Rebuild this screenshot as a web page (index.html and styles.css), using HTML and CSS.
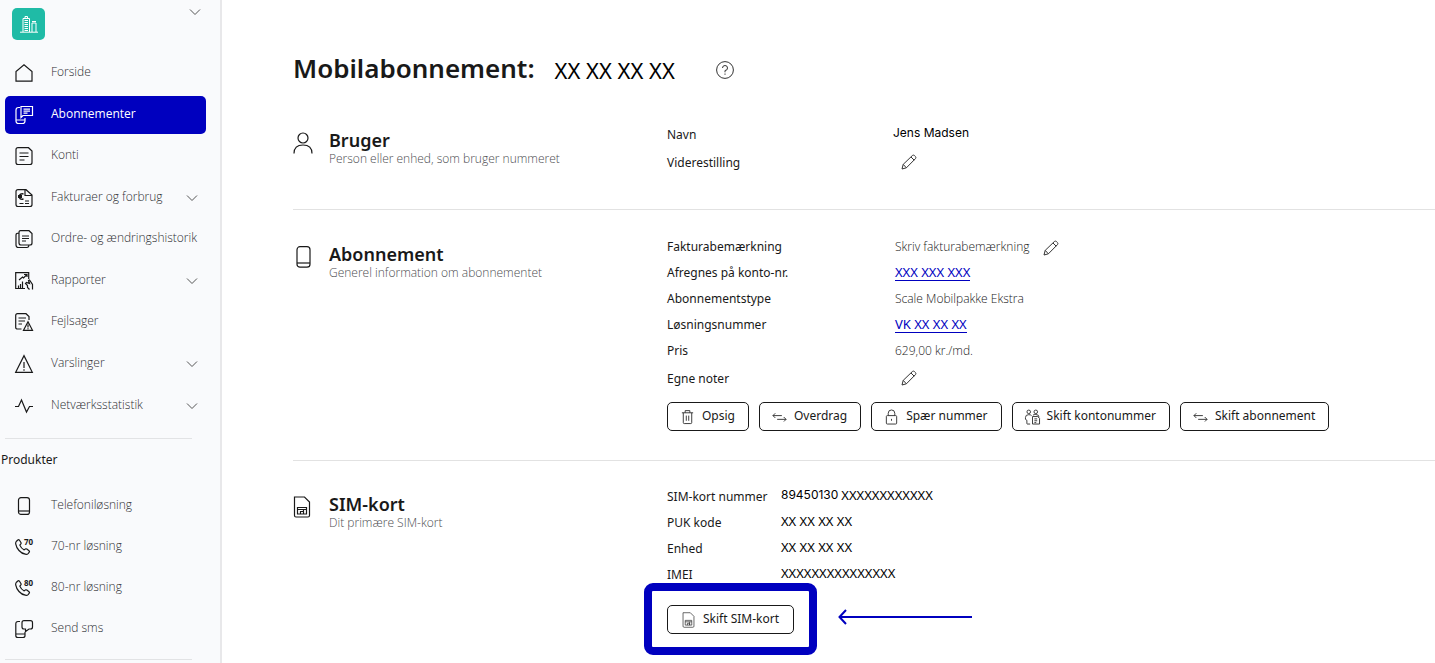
FILE: index.html
```html
<!DOCTYPE html>
<html lang="da">
<head>
<meta charset="utf-8">
<title>Mobilabonnement</title>
<link rel="stylesheet" href="styles.css">
</head>
<body>
<svg class="sprite" aria-hidden="true">
  <symbol id="chevron" viewBox="0 0 12 8"><path d="M1 1.500 6 6.500 11 1.500"/></symbol>
  <symbol id="pencil" viewBox="0 0 16 16"><path d="M1 15l1.200-4.600L11.400 1.500q1-.8 2 0l1.100 1.100q.8 1 0 2L5.400 13.800 1 15ZM2.200 10.400l3.200 3.400M10 3l3.200 3.200"/></symbol>
  <symbol id="phone" viewBox="0 0 18 18"><rect x="3.500" y=".6" width="11" height="16.800" rx="2.500"/><path d="M3.500 14h11"/></symbol>
  <symbol id="handset" viewBox="0 0 18 18"><path d="M1.500 3.200 2.800 2q1-.7 1.700.3l1.400 2.200q.5.9-.2 1.600l-.9 1q1.200 3 4.400 4.800l1-.8q.8-.6 1.600 0l2.200 1.600q.9.8.1 1.700l-1 1.200q-1 1-2.800.6C5.500 15.500 1.500 10.500.7 5.800Q.5 4.200 1.500 3.200Z"/></symbol>
  <symbol id="sim" viewBox="0 0 18 22"><path d="M1.500 1h10l5 5v13.500q0 1.500-1.500 1.500H3q-1.500 0-1.500-1.500Z"/><path d="M4.500 11.500h9v6.500h-9ZM4.500 13.500h9M7.500 18v-2.500h3V18M10.500 13.500V18"/></symbol>
  <symbol id="swap" viewBox="0 0 16 10"><path d="M10.500 3.500H1M3.500 1 1 3.500 3.500 6M5.500 7.500H15M12.500 5 15 7.500 12.500 10"/></symbol>
</svg>
<div class="page">
  <aside class="sidebar">
    <div class="account">
      <span class="logo"><svg viewBox="0 0 18 18"><path d="M0 17.200h18M3 17V3.500h6.500V17M5 3.500V1.500h2.500v2M12 17V8h4V17M12 6.500h4M4.500 5.500H8M4.500 7.500H8M4.500 9.500H8M4.500 11.500H8M4.500 13.500H8M4.500 15.500H8"/></svg></span>
      <button class="toggle" aria-label="Skift konto"><svg class="chevron"><use href="#chevron"/></svg></button>
    </div>
    <nav aria-label="Hovedmenu">
      <ul class="menu">
        <li><a href="#"><svg viewBox="0 0 18 18"><path d="M1 17.200V7.500L9 .8l8 6.700v9.700Z"/></svg><span>Forside</span></a></li>
        <li class="tall"><a href="#" class="active" aria-current="page"><svg viewBox="0 0 18 18"><path d="M5 1.500H3.500Q1 1.500 1 4v11q0 2.500 2.500 2.500h4Q10 17.500 10 15v-3M1 14h9M6 .5h11.500v9H8L6 11.500ZM8.500 3.200h6.500M8.500 5.200h6.500M8.500 7.200h4"/></svg><span>Abonnementer</span></a></li>
        <li><a href="#"><svg viewBox="0 0 18 18"><path d="M3 .7h10.500L17 4v11.500q0 2-2 2H3q-2 0-2-2v-13Q1 .7 3 .7ZM4.500 6h9M4.500 9.500h9M4.500 13h5"/></svg><span>Konti</span></a></li>
        <li class="tall"><a href="#"><svg viewBox="0 0 18 18"><path d="M3 .7h8L17 6v9.500q0 2-2 2H3q-2 0-2-2v-13Q1 .7 3 .7ZM10 1v5.500h6.500M4.500 14.500h4M10 14.500h4M10 12h4"/><path class="bold" d="M8.500 5q-3.700-.8-4 2.500t4 2.500M3 6.800h4M3 8.300h4"/></svg><span>Fakturaer og forbrug</span><svg class="chevron"><use href="#chevron"/></svg></a></li>
        <li><a href="#"><svg viewBox="0 0 18 18"><path d="M5.500.7H14L17 3.500V13q0 2-2 2H6q-2 0-2-2V2.500Q4 .7 5.500.7ZM4 3q-3 0-3 2v10q0 2.500 2.500 2.500H12q1.500 0 2-2M7 6h7M7 8.500h7M7 11h4"/></svg><span>Ordre- og ændringshistorik</span></a></li>
        <li class="tall"><a href="#"><svg viewBox="0 0 18 18"><path d="M10 16.500H.7V.7h13V7M4 8l3.500-3 1 1L12 2.500M9 2.500h3V5M3.500 16v-2.500M5.500 16v-4M7.500 16V9.500M17.500 17.500v-5l-3-4.500-1 .5 1 3-3-1-1 1 2 2v2l2 2"/></svg><span>Rapporter</span><svg class="chevron"><use href="#chevron"/></svg></a></li>
        <li><a href="#"><svg viewBox="0 0 18 18"><path d="M6.500 16H2.500Q.7 16 .7 14.500V2.500Q.7.700 2.500.7H11L14 3.500V7M3.500 5H11M3.500 8H10M3.500 11H7M8.500 17.300 13 8.700l4.500 8.600ZM13 11.500v3M13 15.300v1"/></svg><span>Fejlsager</span></a></li>
        <li class="tall"><a href="#"><svg viewBox="0 0 18 18"><path d="M.7 17.300 9 .7l8.300 16.600ZM9 7v6M9 14.200v1.500"/></svg><span>Varslinger</span><svg class="chevron"><use href="#chevron"/></svg></a></li>
        <li class="tall"><a href="#"><svg viewBox="0 0 18 18"><path d="M0 9.500h3.500L6.500 3l5 12 3-5.500H18"/></svg><span>Netværksstatistik</span><svg class="chevron"><use href="#chevron"/></svg></a></li>
      </ul>
      <h2 class="group">Produkter</h2>
      <ul class="menu products">
        <li><a href="#"><svg viewBox="0 0 18 18"><use href="#phone"/></svg><span>Telefoniløsning</span></a></li>
        <li><a href="#"><svg viewBox="0 0 18 18"><use href="#handset"/><text x="9" y="7">70</text></svg><span>70-nr løsning</span></a></li>
        <li><a href="#"><svg viewBox="0 0 18 18"><use href="#handset"/><text x="9" y="7">80</text></svg><span>80-nr løsning</span></a></li>
        <li><a href="#"><svg viewBox="0 0 18 18"><path d="M5 1.500H3Q.8 1.500.8 4v11.500q0 2 2 2H8q2 0 2-2V12M.8 14h9M9 .7h6.500q2 0 2 2V7q0 2-2 2H14l-3.500 2.500V9H9Q7 9 7 7V2.700Q7 .7 9 .7Z"/></svg><span>Send sms</span></a></li>
      </ul>
    </nav>
  </aside>
  <main>
    <header class="title">
      <h1>Mobilabonnement:</h1>
      <span class="number">XX XX XX XX</span>
      <button class="plain" aria-label="Hjælp"><svg class="help" viewBox="0 0 18 18"><circle cx="9" cy="9" r="8.400"/><path d="M6.500 7q0-2.500 2.500-2.500T11.500 7 9 9.500v1.800M9 12.500v1.300"/></svg></button>
    </header>
    <section class="user">
      <div class="intro"><svg class="lead" viewBox="0 0 20 22"><circle cx="10" cy="6" r="5"/><path d="M1 21.500q0-8.500 9-8.500t9 8.500"/></svg>
        <div><h2>Bruger</h2><p>Person eller enhed, som bruger nummeret</p></div></div>
      <dl>
        <div><dt>Navn</dt><dd class="inter">Jens Madsen</dd></div>
        <div><dt>Viderestilling</dt><dd><button class="plain edit" aria-label="Rediger viderestilling"><svg class="pencil"><use href="#pencil"/></svg></button></dd></div>
      </dl>
    </section>
    <section class="subscription">
      <div class="intro"><svg class="lead" viewBox="0 0 20 22"><rect x="4" y=".7" width="13" height="20.500" rx="3"/><path d="M4 17h13"/></svg>
        <div><h2>Abonnement</h2><p>Generel information om abonnementet</p></div></div>
      <div class="details">
        <dl>
          <div><dt>Fakturabemærkning</dt><dd>Skriv fakturabemærkning<button class="plain note" aria-label="Rediger fakturabemærkning"><svg class="pencil"><use href="#pencil"/></svg></button></dd></div>
          <div><dt>Afregnes på konto-nr.</dt><dd><a href="#">XXX XXX XXX</a></dd></div>
          <div><dt>Abonnementstype</dt><dd>Scale Mobilpakke Ekstra</dd></div>
          <div><dt>Løsningsnummer</dt><dd><a href="#">VK XX XX XX</a></dd></div>
          <div><dt>Pris</dt><dd>629,00 kr./md.</dd></div>
          <div class="notes"><dt>Egne noter</dt><dd><button class="plain edit" aria-label="Rediger noter"><svg class="pencil"><use href="#pencil"/></svg></button></dd></div>
        </dl>
        <div class="actions">
          <button class="btn"><svg viewBox="0 0 16 16"><path d="M2 3.500h12M5.500 3.500V1.200h5v2.300M3.500 3.500V14q0 1 1 1h7q1 0 1-1V3.500M6.700 6.500v5.500M9.300 6.500v5.500"/></svg>Opsig</button>
          <button class="btn"><svg viewBox="0 -3 16 16"><use href="#swap" width="16" height="10"/></svg>Overdrag</button>
          <button class="btn"><svg viewBox="0 0 16 16"><rect x="2.500" y="6.500" width="11" height="9" rx="1"/><path d="M4.500 6.500V4q0-3.500 3.500-3.500T11.500 4v2.500M8 10v2"/></svg>Spær nummer</button>
          <button class="btn"><svg viewBox="0 0 16 16"><circle cx="4" cy="2.500" r="1.900"/><circle cx="11.500" cy="2.500" r="1.900"/><path d="M7 6.500Q6 5.500 4 5.500.5 5.500.5 8.500v2l1.500 1V15q0 .5.500.5h3M8.500 6q1-.7 3-.7 3.500 0 3.500 3M8 7.500h5.500l2 2v6H8ZM10 10h3M10 12h3M10 14h2"/></svg>Skift kontonummer</button>
          <button class="btn"><svg viewBox="0 -3 16 16"><use href="#swap" width="16" height="10"/></svg>Skift abonnement</button>
        </div>
      </div>
    </section>
    <section class="simcard">
      <div class="intro"><svg class="lead" viewBox="0 0 20 22"><use href="#sim" width="18" height="22"/></svg>
        <div><h2>SIM-kort</h2><p>Dit primære SIM-kort</p></div></div>
      <div class="details">
        <dl class="narrow">
          <div><dt>SIM-kort nummer</dt><dd class="code"><span class="inter">89450130</span> XXXXXXXXXXXX</dd></div>
          <div><dt>PUK kode</dt><dd class="code">XX XX XX XX</dd></div>
          <div><dt>Enhed</dt><dd class="code">XX XX XX XX</dd></div>
          <div><dt>IMEI</dt><dd class="code">XXXXXXXXXXXXXXX</dd></div>
        </dl>
        <div class="callout">
          <button class="btn"><svg viewBox="0 0 18 22"><use href="#sim" width="18" height="22"/></svg>Skift SIM-kort</button>
          <span class="frame"></span>
          <svg class="arrow" viewBox="0 0 134 16"><path d="M134 8H1.500M8 1 1.500 8 8 15"/></svg>
        </div>
      </div>
    </section>
  </main>
</div>
</body>
</html>
```
FILE: styles.css
```css
* { box-sizing: border-box; }
body { margin: 0; background: #fff; color: #191919; font: 12px/20px "Noto Sans", sans-serif; }
h1, h2, p, ul, dl, dd { margin: 0; padding: 0; }
ul { list-style: none; }
svg { display: block; flex: none; fill: none; stroke: currentColor; stroke-width: 1.2; overflow: visible; }
.sprite { position: absolute; width: 0; height: 0; }
.page { display: flex; min-height: 100vh; }
.chevron { width: 12px; height: 8px; stroke-width: 1; }
button { font: inherit; color: inherit; cursor: pointer; }
.plain, .toggle { border: 0; background: none; padding: 0; }

.sidebar { flex: none; width: 222px; background: #f9fafc; border-right: 2px solid #e8e8ea; }
.account { display: flex; justify-content: space-between; align-items: flex-start; padding: 8px 19px 11px 12px; }
.logo { display: grid; place-items: center; width: 33px; height: 32px; border-radius: 5px; background: #1fbba6; color: #fff; }
.logo svg { width: 18px; height: 18px; stroke-width: 1; }
.toggle { color: #555; }
.menu { padding: 0 14px 0 5px; }
.menu li { display: flex; align-items: flex-end; height: 41px; }
.menu li.tall { height: 42px; }
.menu a { display: flex; align-items: center; flex: 1; height: 38px; padding: 0 8px 0 10px; border-radius: 5px; color: #2e2f33; font-family: "Open Sans", sans-serif; font-weight: 300; text-decoration: none; white-space: nowrap; }
.menu a > span { padding-bottom: 3px; }
.menu a > svg:first-child { width: 18px; height: 18px; margin-right: 18px; color: #191919; }
.menu a > .chevron { margin-left: auto; color: #555; }
.menu .active { background: #0000bf; color: #fff; font-weight: 400; }
.menu .active > svg:first-child { color: #fff; }
.menu text { font: bold 8px "Noto Sans", sans-serif; fill: currentColor; stroke: none; }
.bold { stroke-width: 1.5; }
.group { margin: 13px 28px 0 5px; padding-top: 11px; border-top: 1px solid #e2e3e5; font-size: 12px; font-weight: 400; text-indent: -4px; }
.products { padding-top: 14px; }
.products::after { content: ""; display: block; margin: 11px 14px 0 0; border-top: 1px solid #e2e3e5; }

main { flex: 1; min-width: 0; padding-left: 71px; }
.title { display: flex; align-items: center; height: 110px; padding-top: 30px; }
h1 { padding-bottom: 4px; font: 600 26px/36px "Noto Sans", sans-serif; }
.number { margin-left: 20px; font-size: 22px; line-height: 28px; color: #000; }
.title .plain { margin-left: 41px; }
.help { width: 18px; height: 18px; color: #333; stroke-width: 1; }
section { display: grid; grid-template-columns: 374px 1fr; border-bottom: 1px solid #e2e2e2; }
.user { padding: 14px 0 29px; }
.subscription { padding: 26px 0 29px; }
.simcard { padding: 25px 0 29px; }
.intro { display: flex; gap: 16px; padding-top: 8px; }
.user .intro { padding-top: 6px; }
.lead { width: 20px; height: 22px; margin-top: 2px; }
.intro h2 { font: 600 18px/20px "Noto Sans", sans-serif; }
.intro p { color: #4c4d50; font-family: "Open Sans", sans-serif; font-weight: 300; line-height: 18px; }
dl > div { display: flex; min-height: 26px; }
.user dl > div { min-height: 28px; }
dl > .notes { padding-top: 2px; }
dt { width: 228px; line-height: 22px; }
.narrow dt { width: 114px; }
dd { display: flex; align-items: flex-start; font-family: "Open Sans", sans-serif; font-weight: 300; line-height: 22px; color: #191919; }
dd a { margin-top: 3px; border-bottom: 1px solid #0000bf; color: #0000bf; font: 13px/15px "Noto Sans", sans-serif; text-decoration: none; }
.inter { font: 12px/18px Inter, sans-serif; color: #000; }
.user .inter { margin-left: -2px; }
.code { gap: 3px; font: 13px/18px "Noto Sans", sans-serif; color: #000; }
.pencil { width: 16px; height: 16px; stroke-width: 1; color: #333; }
.edit { margin: 2px 0 0 6px; }
.note { margin: 4px 0 0 14px; }
.actions { display: flex; flex-wrap: wrap; gap: 10px; margin-top: 8px; }
.btn { display: flex; align-items: center; gap: 7px; height: 29px; padding: 0 13px 2px 12px; border: 1px solid #191919; border-radius: 5px; background: #fff; }
.btn svg { width: 15px; height: 16px; margin-top: 2px; stroke-width: 1; color: #333; }
.notes { min-height: 28px; }
.callout { position: relative; width: max-content; margin-top: 15px; }
.callout .btn { padding: 0 14px 2px 13px; }
.frame { position: absolute; inset: -22px -23px -21px; border: 8px solid #0000bf; border-radius: 9px; }
.arrow { position: absolute; left: calc(100% + 44px); top: 4px; width: 134px; height: 16px; color: #0000bf; stroke-width: 2; }
```
